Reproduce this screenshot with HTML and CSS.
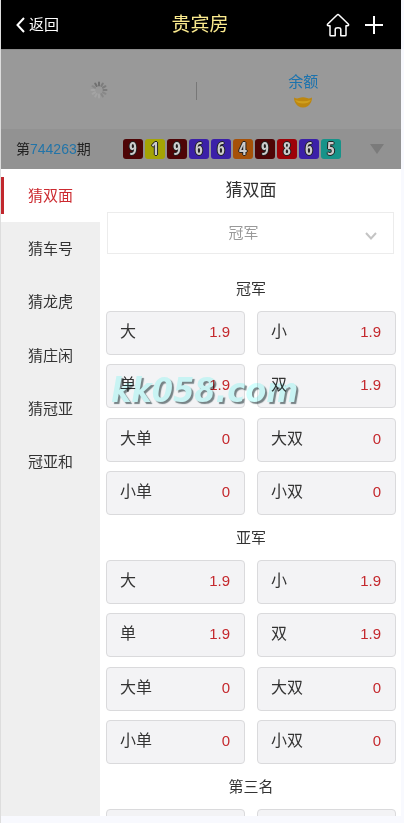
FILE: index.html
```html
<!DOCTYPE html>
<html lang="zh-CN">
<head>
<meta charset="utf-8">
<meta name="viewport" content="width=device-width, initial-scale=1">
<title>贵宾房</title>
<link rel="stylesheet" href="styles.css">
</head>
<body>
<div class="app">
  <header class="topbar">
    <a class="back" href="#">
      <svg width="9" height="16" viewBox="0 0 9 16" fill="none" stroke="currentColor" stroke-width="2" aria-hidden="true"><path d="M8 1L1.500 8L8 15"/></svg>
      <span>返回</span>
    </a>
    <h1 class="room">贵宾房</h1>
    <div class="actions">
      <a href="#" aria-label="首页"><svg width="24" height="24" viewBox="0 0 24 24" fill="none" stroke="currentColor" stroke-width="1.500" stroke-linejoin="round" aria-hidden="true"><path d="M12 1.500Q12.600 1.500 13.200 2.200L22.500 11.200Q23 12.500 21.500 12.800H20V22Q20 22.800 19.200 22.800H14.800V16.500Q14.800 14.800 12 14.800T9.200 16.500V22.800H4.800Q4 22.800 4 22V12.800H2.500Q1 12.500 1.500 11.200L10.800 2.200Q11.400 1.500 12 1.500Z"/></svg></a>
      <button type="button" aria-label="更多"><svg width="20" height="20" viewBox="0 0 20 20" stroke="currentColor" stroke-width="2" aria-hidden="true"><path d="M1 10H19M10 1V19"/></svg></button>
    </div>
  </header>

  <section class="account">
    <div class="panel">
      <svg width="18" height="18" viewBox="0 0 18 18" stroke-width="2" stroke-linecap="round" aria-hidden="true">
        <path stroke="#707070" d="M9 1.500V4.500M5.200 2.500L6.700 5"/>
        <path stroke="#7c7c7c" d="M12.800 2.500L11.300 5M15.500 5.200L13 6.700M16.500 9H13.500"/>
        <path stroke="#888" d="M2.500 5.200L5 6.700M15.500 12.800L13 11.300M12.800 15.500L11.300 13"/>
        <path stroke="#a4a4a4" d="M1.500 9H4.500M2.500 12.800L5 11.300M5.200 15.500L6.700 13M9 16.500V13.500"/>
      </svg>
    </div>
    <div class="panel balance">
      <span>余额</span>
      <svg width="20" height="13" viewBox="0 0 20 13" aria-hidden="true"><path fill="#bd8710" d="M1 1.500Q4 3 6 2Q10 .5 14 2Q16 3 19 1.500Q19 7 15 10Q10 13 5 10Q1 7 1 1.500Z"/><path fill="#d0a01e" d="M2 4Q10 6.500 18 4Q16 7.500 10 7.500T2 4Z"/></svg>
    </div>
  </section>

  <section class="draw">
    <p class="issue">第<span>744263</span>期</p>
    <ol class="balls">
      <li class="maroon">9</li><li class="yellow">1</li><li class="maroon">9</li><li class="violet">6</li><li class="violet">6</li><li class="orange">4</li><li class="maroon">9</li><li class="red">8</li><li class="violet">6</li><li class="teal">5</li>
    </ol>
    <button class="expand" type="button" aria-label="展开"><svg width="16" height="10" viewBox="0 0 16 10" aria-hidden="true"><path fill="#7b7b7b" d="M1 0H15L8 10Z"/></svg></button>
  </section>

  <div class="body">
    <nav class="side">
      <div class="tabs">
        <a class="tab current" href="#">猜双面</a>
        <a class="tab" href="#">猜车号</a>
        <a class="tab" href="#">猜龙虎</a>
        <a class="tab" href="#">猜庄闲</a>
        <a class="tab" href="#">猜冠亚</a>
        <a class="tab" href="#">冠亚和</a>
      </div>
    </nav>
    <main class="play">
      <h2 class="title">猜双面</h2>
      <div class="picker">
        <select aria-label="名次"><option>冠军</option><option>亚军</option><option>第三名</option></select>
        <svg class="chevron" width="12" height="8" viewBox="0 0 12 8" fill="none" stroke="#c4c4c4" stroke-width="2" aria-hidden="true"><path d="M1 1L6 6.500L11 1"/></svg>
      </div>

      <h3 class="rank">冠军</h3>
      <div class="bets">
        <button class="bet" type="button">大<span>1.9</span></button>
        <button class="bet" type="button">小<span>1.9</span></button>
        <button class="bet" type="button">单<span>1.9</span></button>
        <button class="bet" type="button">双<span>1.9</span></button>
        <button class="bet" type="button">大单<span>0</span></button>
        <button class="bet" type="button">大双<span>0</span></button>
        <button class="bet" type="button">小单<span>0</span></button>
        <button class="bet" type="button">小双<span>0</span></button>
      </div>

      <h3 class="rank">亚军</h3>
      <div class="bets">
        <button class="bet" type="button">大<span>1.9</span></button>
        <button class="bet" type="button">小<span>1.9</span></button>
        <button class="bet" type="button">单<span>1.9</span></button>
        <button class="bet" type="button">双<span>1.9</span></button>
        <button class="bet" type="button">大单<span>0</span></button>
        <button class="bet" type="button">大双<span>0</span></button>
        <button class="bet" type="button">小单<span>0</span></button>
        <button class="bet" type="button">小双<span>0</span></button>
      </div>

      <h3 class="rank">第三名</h3>
      <div class="bets">
        <button class="bet" type="button" aria-label="大"></button>
        <button class="bet" type="button" aria-label="小"></button>
      </div>
      <div class="watermark">kk058.com</div>
    </main>
  </div>
</div>
</body>
</html>
```
FILE: styles.css
```css
* {
  box-sizing: border-box;
}

body {
  margin: 0;
  background: #f8f9fe;
  color: #333;
  font: 15px/20px "Liberation Sans", "Noto Sans CJK SC", sans-serif;
}

h1, h2, h3, p, ol {
  margin: 0;
  padding: 0;
  font-weight: 400;
}

a {
  color: inherit;
  text-decoration: none;
}

button, select {
  margin: 0;
  padding: 0;
  border: 0;
  background: none;
  color: inherit;
  font: inherit;
}

svg {
  display: block;
}

.app {
  display: flex;
  flex-direction: column;
  height: 100vh;
  padding: 0 3px 7px 0;
  border-left: 1px solid #ddd;
  overflow: hidden;
}

.topbar {
  display: grid;
  grid-template-columns: 1fr auto 1fr;
  align-items: center;
  flex: none;
  height: 49px;
  padding: 0 17px 0 15px;
  background: #000;
  color: #fff;
}

.back {
  display: flex;
  align-items: center;
  gap: 4px;
}

.room {
  color: #fbea8e;
  font-size: 19px;
  line-height: 28px;
}

.actions {
  display: flex;
  align-items: center;
  justify-content: flex-end;
  gap: 14px;
}

.account {
  display: flex;
  align-items: center;
  flex: none;
  height: 80px;
  border-top: 1px solid #8c8c8c;
  background: #999;
}

.panel {
  display: flex;
  flex: 1;
  flex-direction: column;
  align-items: center;
  justify-content: center;
}

.balance {
  gap: 4px;
  padding: 2px 0 0 9px;
  color: #1c73ae;
}

.balance::before {
  content: "";
  position: absolute;
  left: 196px;
  width: 1px;
  height: 18px;
  background: #777;
}

.draw {
  display: flex;
  align-items: center;
  flex: none;
  height: 40px;
  padding: 0 16px 0 15px;
  background: #929292;
}

.issue {
  flex: none;
  width: 107px;
  color: #222;
  font-size: 14px;
}

.issue span {
  color: #2274a8;
}

.balls {
  display: flex;
  gap: 2px;
  list-style: none;
}

.balls li {
  width: 20px;
  height: 20px;
  border-radius: 3px;
  color: #ccc;
  font: 700 17px/20px "Liberation Sans Narrow", "Open Sans Condensed", "Roboto Condensed", "Noto Sans", sans-serif;
  text-align: center;
  text-shadow: 1px 0 #222, -1px 0 #222, 0 1px #222, 0 -1px #222;
}

.balls .maroon { background: #4e0506; }
.balls .yellow { background: #a5a405; }
.balls .violet { background: #3b20a8; }
.balls .orange { background: #a65108; }
.balls .red { background: #9d0308; }
.balls .teal { background: #179389; }

.expand {
  margin-left: auto;
}

.body {
  display: flex;
  flex: 1;
  min-height: 0;
  background: #fff;
  overflow: hidden;
}

.side {
  flex: none;
  width: 99px;
  background: #efefef;
}

.tabs {
  display: flex;
  flex-direction: column;
  height: 320px;
}

.tab {
  display: flex;
  flex: 1;
  align-items: center;
  justify-content: center;
}

.current {
  background: linear-gradient(#c1272d, #c1272d) left center / 3px 37px no-repeat #fff;
  color: #cc2a30;
}

.play {
  position: relative;
  flex: 1;
  padding: 0 5px 0 6px;
  background: #fff;
}

.title {
  font-size: 17px;
  line-height: 43px;
  text-align: center;
}

.picker {
  position: relative;
  margin: 0 2px 12px 1px;
}

.picker select {
  display: block;
  width: 100%;
  height: 42px;
  padding: 0 14px 0 0;
  border: 1px solid #ececec;
  border-radius: 0;
  appearance: none;
  color: #999;
  text-align: center;
  text-align-last: center;
}

.chevron {
  position: absolute;
  top: 20px;
  right: 17px;
  pointer-events: none;
}

.rank {
  font-size: 15px;
  line-height: 45px;
  text-align: center;
}

.bets {
  display: grid;
  grid-template-columns: 1fr 1fr;
  column-gap: 12px;
  align-content: space-between;
  height: 204px;
}

.bet {
  display: flex;
  align-items: center;
  justify-content: space-between;
  height: 44px;
  padding: 0 14px 2px 13px;
  border: 1px solid #dadadc;
  border-radius: 4px;
  background: #f3f3f5;
  font-size: 16px;
}

.bet span {
  color: #c4282d;
  font-size: 15px;
}

.watermark {
  position: absolute;
  top: 197px;
  left: 11px;
  color: #d2fffd;
  font: italic 700 34px/48px "DejaVu Sans Condensed", "DejaVu Sans", sans-serif;
  text-shadow: 2px 2px 1px #7d8a8c;
  mix-blend-mode: multiply;
  pointer-events: none;
}
```
